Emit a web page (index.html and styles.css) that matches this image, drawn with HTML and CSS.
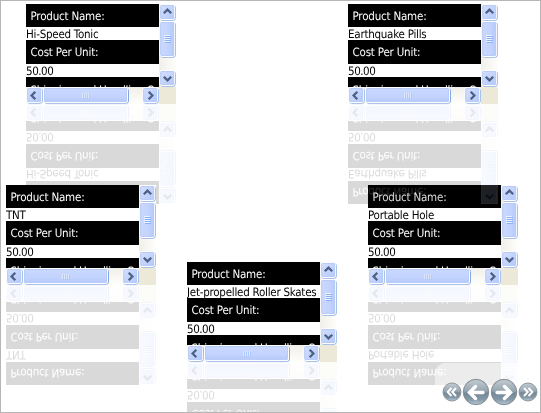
FILE: index.html
```html
<!DOCTYPE html>
<html lang="en">
<head>
<meta charset="utf-8">
<title>Product carousel</title>
<link rel="stylesheet" href="styles.css">
</head>
<body>
<svg class="defs" width="0" height="0" aria-hidden="true">
  <defs>
    <linearGradient id="face" x1="0" y1="0" x2="1" y2="1"><stop offset="0" stop-color="#d5e0fe"/><stop offset="1" stop-color="#b2c8fb"/></linearGradient>
    <linearGradient id="thumbV"><stop offset="0" stop-color="#cbd9ff"/><stop offset=".6" stop-color="#c2d3fe"/><stop offset="1" stop-color="#b4c8f8"/></linearGradient>
    <linearGradient id="thumbH" x1="0" y1="0" x2="0" y2="1"><stop offset="0" stop-color="#cbd9ff"/><stop offset=".6" stop-color="#c2d3fe"/><stop offset="1" stop-color="#b4c8f8"/></linearGradient>
    <linearGradient id="trackV"><stop offset="0" stop-color="#f1efe9"/><stop offset="1" stop-color="#fefefb"/></linearGradient>
    <linearGradient id="trackH" x1="0" y1="0" x2="0" y2="1"><stop offset="0" stop-color="#f1efe9"/><stop offset="1" stop-color="#fefefb"/></linearGradient>
    <linearGradient id="ball" x1="0" y1="0" x2="0" y2="1"><stop offset="0" stop-color="#c3ccd2"/><stop offset=".46" stop-color="#96a5b0"/><stop offset=".54" stop-color="#748896"/><stop offset=".8" stop-color="#8499a7"/><stop offset="1" stop-color="#b9cbd6"/></linearGradient>
    <g id="box">
      <rect x="1.5" y="1.5" width="14.700" height="14.700" rx="2" fill="none" stroke="#86a8e2"/>
      <rect x=".8" y=".5" width="14.700" height="15" rx="2" fill="url(#face)" stroke="#fff"/>
      <rect x="1.700" y="1.5" width="13" height="13" rx="1" fill="none" stroke="#b9cbf7"/>
    </g>
    <symbol id="vbar" viewBox="0 0 17 83">
      <rect width="17" height="83" fill="url(#trackV)"/>
      <use href="#box" x="0" y="0"/>
      <path d="M4.800 9.300 8.500 5.600l3.700 3.700" fill="none" stroke="#4d6185" stroke-width="2.300"/>
      <rect x="1.5" y="18.5" width="14.700" height="34.700" rx="2" fill="none" stroke="#86a8e2"/>
      <rect x=".8" y="17.5" width="14.700" height="35" rx="2" fill="url(#thumbV)" stroke="#fff"/>
      <rect x="1.700" y="18.5" width="13" height="33" rx="1" fill="none" stroke="#b9cbf7"/>
      <path d="M5 31.5h6M5 33.5h6M5 35.5h6M5 37.5h6" stroke="#eef4fe"/>
      <path d="M6 32.5h6M6 34.5h6M6 36.5h6M6 38.5h6" stroke="#8cb0f8"/>
      <use href="#box" x="0" y="66"/>
      <path d="M4.800 72.700l3.700 3.700 3.700-3.700" fill="none" stroke="#4d6185" stroke-width="2.300"/>
    </symbol>
    <symbol id="hbar" viewBox="0 0 133 17">
      <rect width="133" height="17" fill="url(#trackH)"/>
      <use href="#box" x="0" y="0"/>
      <path d="M9.300 4.800l-3.700 3.700 3.700 3.700" fill="none" stroke="#4d6185" stroke-width="2.300"/>
      <rect x="18.5" y="1.5" width="84" height="14.700" rx="2" fill="none" stroke="#86a8e2"/>
      <rect x="17.5" y=".5" width="84" height="15" rx="2" fill="url(#thumbH)" stroke="#fff"/>
      <rect x="18.5" y="1.5" width="82" height="13" rx="1" fill="none" stroke="#b9cbf7"/>
      <path d="M56.5 6v5M58.5 6v5M60.5 6v5M62.5 6v5" stroke="#dce7fe"/>
      <path d="M57.5 7v5M59.5 7v5M61.5 7v5M63.5 7v5" stroke="#b0c9fc"/>
      <use href="#box" x="116" y="0"/>
      <path d="M122.700 4.800l3.700 3.700-3.700 3.700" fill="none" stroke="#4d6185" stroke-width="2.300"/>
    </symbol>
  </defs>
</svg>
<main class="stage">
  <section class="card hole">
    <div class="view"><h2 class="name">Product Name:</h2><p>Portable Hole</p><h2 class="cost">Cost Per Unit:</h2><p class="price">50.00</p><h2 class="ship">Shipping and Handling Cost:</h2></div>
    <svg class="vbar"><use href="#vbar"/></svg><svg class="hbar"><use href="#hbar"/></svg>
  </section>
  <section class="card tonic">
    <div class="view"><h2 class="name">Product Name:</h2><p>Hi-Speed Tonic</p><h2 class="cost">Cost Per Unit:</h2><p class="price">50.00</p><h2 class="ship">Shipping and Handling Cost:</h2></div>
    <svg class="vbar"><use href="#vbar"/></svg><svg class="hbar"><use href="#hbar"/></svg>
  </section>
  <section class="card pills">
    <div class="view"><h2 class="name">Product Name:</h2><p>Earthquake Pills</p><h2 class="cost">Cost Per Unit:</h2><p class="price">50.00</p><h2 class="ship">Shipping and Handling Cost:</h2></div>
    <svg class="vbar"><use href="#vbar"/></svg><svg class="hbar"><use href="#hbar"/></svg>
  </section>
  <section class="card tnt">
    <div class="view"><h2 class="name">Product Name:</h2><p>TNT</p><h2 class="cost">Cost Per Unit:</h2><p class="price">50.00</p><h2 class="ship">Shipping and Handling Cost:</h2></div>
    <svg class="vbar"><use href="#vbar"/></svg><svg class="hbar"><use href="#hbar"/></svg>
  </section>
  <section class="card skates">
    <div class="view"><h2 class="name">Product Name:</h2><p>Jet-propelled Roller Skates</p><h2 class="cost">Cost Per Unit:</h2><p class="price">50.00</p><h2 class="ship">Shipping and Handling Cost:</h2></div>
    <svg class="vbar"><use href="#vbar"/></svg><svg class="hbar"><use href="#hbar"/></svg>
  </section>
  <nav class="controls">
    <svg class="small" viewBox="0 0 20 20"><circle cx="10" cy="10" r="9" fill="url(#ball)" stroke="#8d979e"/><path d="M9.5 6 5.700 10l3.800 4M14 6l-3.800 4 3.800 4" fill="none" stroke="#fff" stroke-width="2"/></svg>
    <svg class="big" viewBox="0 0 28 28"><circle cx="14" cy="14" r="12.700" fill="url(#ball)" stroke="#7f8a92"/><path d="M21 14.500H9M13.500 8.500l-6 6 6 6" fill="none" stroke="#fff" stroke-width="3.400" stroke-linecap="round"/></svg>
    <svg class="big" viewBox="0 0 28 28"><circle cx="14" cy="14" r="12.700" fill="url(#ball)" stroke="#7f8a92"/><path d="M7 14.500h12M14.500 8.500l6 6-6 6" fill="none" stroke="#fff" stroke-width="3.400" stroke-linecap="round"/></svg>
    <svg class="small" viewBox="0 0 20 20"><circle cx="10" cy="10" r="9" fill="url(#ball)" stroke="#8d979e"/><path d="M6 6l3.800 4L6 14M10.5 6l3.800 4-3.800 4" fill="none" stroke="#fff" stroke-width="2"/></svg>
  </nav>
</main>
</body>
</html>
```
FILE: styles.css
```css
* { box-sizing: border-box; }
body { margin: 0; background: #fff; }
.defs { position: absolute; }
.stage {
  position: relative;
  width: 541px;
  height: 413px;
  overflow: hidden;
  border: 1px solid #b6b6b6;
  font-family: "DejaVu Sans Condensed", "DejaVu Sans", sans-serif;
  font-stretch: condensed;
  font-size: 11.5px;
  text-rendering: geometricPrecision;
}
.card {
  position: absolute;
  display: grid;
  grid-template: 83px 17px / 133px 17px;
  width: 150px;
  height: 100px;
  background: #ece9d8;
  -webkit-box-reflect: below 0 linear-gradient(rgba(0, 0, 0, .15), rgba(0, 0, 0, .15));
}
.tonic { left: 25px; top: 3px; }
.pills { left: 347px; top: 3px; }
.tnt { left: 5px; top: 184px; }
.hole { left: 367px; top: 184px; }
.skates { left: 186px; top: 261px; }
.view { overflow: hidden; background: #fff; white-space: nowrap; }
.view h2 {
  margin: 0;
  padding-left: 4.5px;
  font-size: 11.5px;
  font-weight: 400;
  color: #fff;
  background: #000;
  letter-spacing: -.2px;
}
.view .name { height: 23px; line-height: 25px; }
.view .cost { height: 24px; line-height: 25px; }
.view .ship { height: 24px; line-height: 26px; letter-spacing: -.2px; }
.view p { height: 13px; margin: 0; line-height: 14px; color: #000; letter-spacing: -.25px; }
.view .price { letter-spacing: -.45px; }
.vbar { display: block; width: 17px; height: 83px; }
.hbar { display: block; width: 133px; height: 17px; }
.controls {
  position: absolute;
  right: 0;
  bottom: 0;
  display: flex;
  align-items: center;
  justify-content: flex-end;
  width: 105px;
  height: 49px;
  padding: 8px 2px 0 0;
  border-radius: 10px 0 0 0;
  background: rgba(255, 255, 255, .5);
}
.controls svg { flex: none; display: block; }
.small { width: 20px; height: 20px; }
.big { width: 28px; height: 28px; }
```
